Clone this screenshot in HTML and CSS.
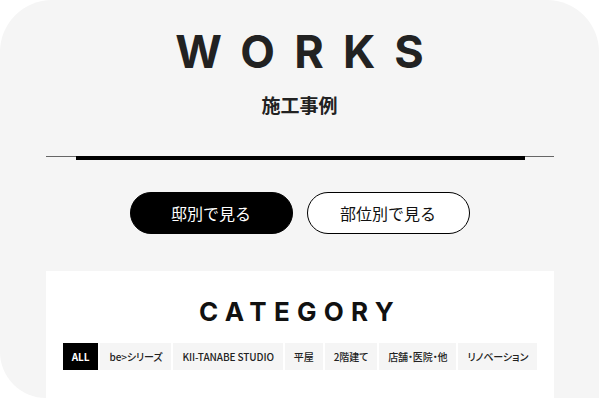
FILE: index.html
```html
<!DOCTYPE html>
<html lang="ja">
<head>
<meta charset="utf-8">
<title>WORKS 施工事例</title>
<link rel="stylesheet" href="styles.css">
</head>
<body>
<div class="frame">
  <header class="hero">
    <h1 class="hero__title">WORKS</h1>
    <p class="hero__sub">施工事例</p>
  </header>
  <div class="divider"><span class="divider__bar"></span></div>
  <nav class="switch">
    <a class="pill pill--dark" href="#">邸別で見る</a>
    <a class="pill" href="#">部位別で見る</a>
  </nav>
  <section class="card">
    <h2 class="card__title">CATEGORY</h2>
    <ul class="tabs">
      <li class="tab tab--active">ALL</li>
      <li class="tab">be&gt;シリーズ</li>
      <li class="tab">KII-TANABE STUDIO</li>
      <li class="tab">平屋</li>
      <li class="tab">2階建て</li>
      <li class="tab">店舗・医院・他</li>
      <li class="tab">リノベーション</li>
    </ul>
  </section>
</div>
</body>
</html>
```
FILE: styles.css
```css
* { box-sizing: border-box; }
html, body { margin: 0; padding: 0; background: #ffffff; }
body { width: 600px; height: 400px; overflow: hidden; }

.frame {
  width: 599px;
  height: 398px;
  background: #f5f5f5;
  border-radius: 52px 52px 0 46px;
  overflow: hidden;
  font-family: "Noto Sans CJK JP", "Noto Sans", sans-serif;
  color: #222;
  display: flex;
  flex-direction: column;
}

.hero {
  padding-top: 29px;
  text-align: center;
}
.hero__title {
  margin: 0;
  font-family: Inter, "Liberation Sans", sans-serif;
  font-weight: 700;
  font-size: 45px;
  line-height: 45px;
  letter-spacing: 0.43em;
  padding-left: 0.43em;
  color: #222;
}
.hero__sub {
  margin: 21px 0 0;
  font-size: 19px;
  line-height: 19px;
  font-weight: 700;
  color: #222;
}

.divider {
  margin: 42px 45px 0 46px;
  height: 1px;
  background: #666;
  display: flex;
  justify-content: center;
}
.divider__bar {
  flex: none;
  width: 449px;
  height: 4px;
  background: #000;
}

.switch {
  margin-top: 35px;
  display: flex;
  justify-content: center;
  gap: 14px;
}
.pill {
  width: 163px;
  height: 42px;
  border-radius: 21px;
  border: 1px solid #000;
  background: #fff;
  color: #111;
  text-decoration: none;
  font-size: 16px;
  display: flex;
  align-items: center;
  justify-content: center;
}
.pill--dark {
  background: #000;
  color: #fff;
}

.card {
  margin: 37px 45px 0 46px;
  flex: 1;
  background: #fff;
  padding-top: 28px;
  text-align: center;
}
.card__title {
  margin: 0;
  font-family: Inter, "Liberation Sans", sans-serif;
  font-weight: 700;
  font-size: 26px;
  line-height: 26px;
  letter-spacing: 0.28em;
  color: #111;
}
.tabs {
  list-style: none;
  margin: 18px 0 0;
  padding: 0;
  display: flex;
  justify-content: center;
  gap: 2px;
}
.tab {
  height: 27px;
  padding: 0 9px;
  background: #f5f5f5;
  font-size: 10px;
  font-weight: 500;
  letter-spacing: -0.01em;
  font-feature-settings: "palt";
  color: #222;
  display: flex;
  align-items: center;
  white-space: nowrap;
}
.tab--active {
  background: #000;
  color: #fff;
  font-weight: 700;
}
```
